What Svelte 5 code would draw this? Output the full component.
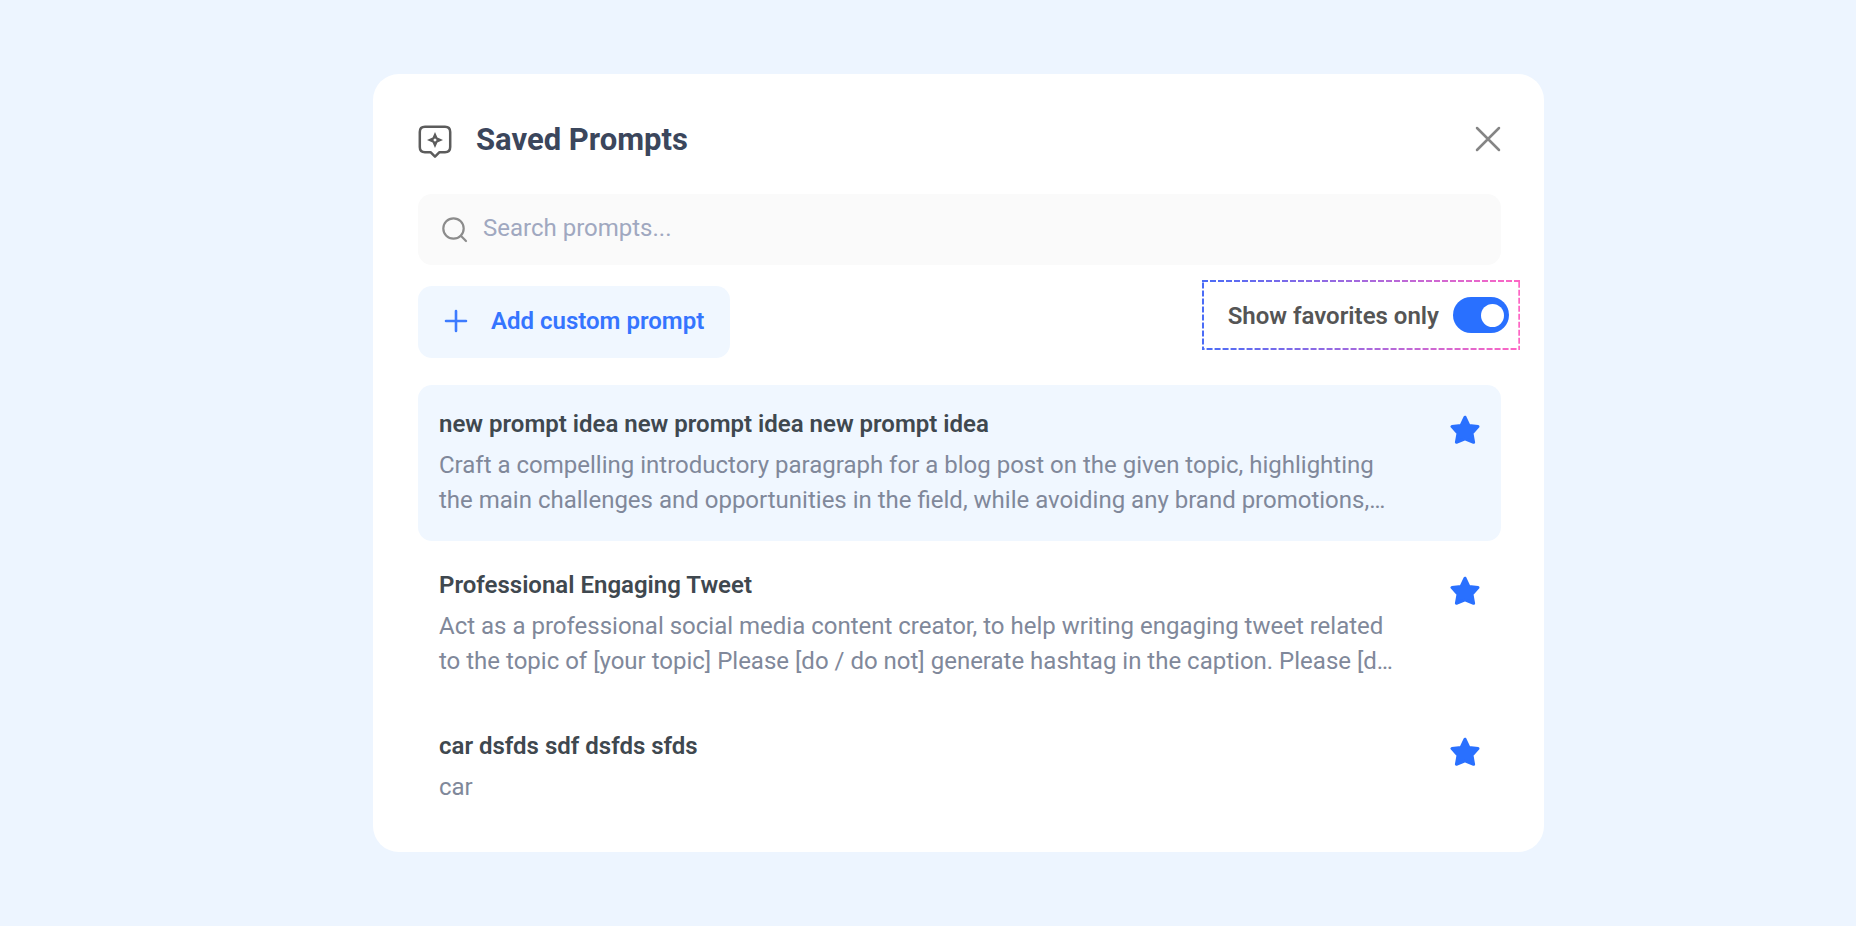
<script>
    // Search term and favorites filter
    let search = "";
    let favoritesOnly = true;

    // Saved prompts shown in the list
    let prompts = [
        {
            title: "new prompt idea new prompt idea new prompt idea",
            text: "Craft a compelling introductory paragraph for a blog post on the given topic, highlighting the main challenges and opportunities in the field, while avoiding any brand promotions,…",
            favorite: true
        },
        {
            title: "Professional Engaging Tweet",
            text: "Act as a professional social media content creator, to help writing engaging tweet related to the topic of [your topic] Please [do / do not] generate hashtag in the caption. Please [d…",
            favorite: true
        },
        {
            title: "car dsfds sdf dsfds sfds",
            text: "car",
            favorite: true
        }
    ];

    let selected = prompts[0].title;

    $: visible = prompts.filter((p) =>
        (!favoritesOnly || p.favorite) &&
        p.title.toLowerCase().includes(search.toLowerCase())
    );

    function toggleFavorite(prompt) {
        prompt.favorite = !prompt.favorite;
        prompts = prompts;
    }
</script>

<main>
    <section class="card">
        <header>
            <svg class="logo" viewBox="0 0 34 34" fill="none" stroke="#5c5c5c" stroke-width="2.5" stroke-linejoin="round">
                <path d="M7 1.8H27Q32.2 1.8 32.2 7V22Q32.2 27.2 27 27.2H21.5L17 31.7L12.5 27.2H7Q1.8 27.2 1.8 22V7Q1.8 1.8 7 1.8Z" />
                <path fill="#5c5c5c" fill-rule="evenodd" stroke="none" d="M17 7L19.4 12.6L25 15L19.4 17.4L17 23L14.6 17.4L9 15L14.6 12.6ZM17 13.2L15.2 15L17 16.8L18.8 15Z" />
            </svg>
            <h1>Saved Prompts</h1>
            <button class="close" aria-label="Close">
                <svg viewBox="0 0 26 26" stroke="#858585" stroke-width="2.5" stroke-linecap="round">
                    <path d="M2 2L24 24M24 2L2 24" />
                </svg>
            </button>
        </header>

        <label class="search">
            <svg viewBox="0 0 26 26" fill="none" stroke="#8c8c8c" stroke-width="2.2" stroke-linecap="round">
                <circle cx="11.5" cy="11.5" r="10.2" />
                <path d="M18.8 18.8L24 24" />
            </svg>
            <input type="text" placeholder="Search prompts..." aria-label="Search prompts" bind:value={search} />
        </label>

        <div class="toolbar">
            <button class="add">
                <svg viewBox="0 0 24 24" stroke="#3d7bff" stroke-width="2.6" stroke-linecap="round">
                    <path d="M12 2V22M2 12H22" />
                </svg>
                Add custom prompt
            </button>

            <label class="favorites">
                <!-- Dashed gradient outline -->
                <svg class="outline" aria-hidden="true">
                    <defs>
                        <linearGradient id="dash" gradientUnits="userSpaceOnUse" x1="0" y1="0" x2="100%" y2="0">
                            <stop offset="0" stop-color="#4a6cf7" />
                            <stop offset="1" stop-color="#ff66c4" />
                        </linearGradient>
                    </defs>
                    <rect width="100%" height="100%" fill="none" stroke="url(#dash)" stroke-width="4" stroke-dasharray="6 2" />
                </svg>
                <span>Show favorites only</span>
                <input type="checkbox" bind:checked={favoritesOnly} />
            </label>
        </div>

        <ul>
            {#each visible as prompt}
                <li class:selected={prompt.title === selected}>
                    <div class="body">
                        <h2>{prompt.title}</h2>
                        <p>{prompt.text}</p>
                    </div>
                    <button class="star" aria-label="Favorite" on:click={() => toggleFavorite(prompt)}>
                        <svg viewBox="0 0 30 30" fill={prompt.favorite ? "#2970ff" : "none"} stroke="#2970ff" stroke-width="3" stroke-linejoin="round">
                            <path d="M15 2.2L19 10.6L28 11.6L22 18.2L23.6 27.3L15 23.8L6.4 27.3L8 18.2L2 11.6L11 10.6Z" />
                        </svg>
                    </button>
                </li>
            {/each}
        </ul>
    </section>
</main>

<style>
    :global(body) {
        margin: 0;
        background: #edf5ff;
    }

    main {
        padding: 74px 312px 74px 373px;
        font-family: Roboto, "Open Sans", sans-serif;
        font-size: 24px;
        line-height: 35px;
    }

    .card {
        padding: 46px 43px 24px 45px;
        background: #fff;
        border-radius: 26px;
    }

    h1,
    h2,
    p,
    ul {
        margin: 0;
        padding: 0;
    }

    button {
        border: 0;
        padding: 0;
        background: none;
        font: inherit;
        cursor: pointer;
    }

    svg {
        display: block;
        flex: none;
    }

    header {
        display: flex;
        align-items: center;
        gap: 24px;
        height: 40px;
    }

    .logo {
        width: 34px;
        height: 34px;
        margin-top: 4px;
    }

    h1 {
        flex: 1;
        font-size: 31px;
        font-weight: 700;
        line-height: 40px;
        color: #3b465c;
    }

    .close svg {
        width: 26px;
        height: 26px;
        margin-bottom: 2px;
    }

    .search {
        display: flex;
        align-items: center;
        gap: 15px;
        height: 71px;
        margin-top: 34px;
        padding: 0 24px;
        background: #fafafa;
        border-radius: 14px;
    }

    .search svg {
        width: 26px;
        height: 26px;
    }

    .search input {
        flex: 1;
        padding: 0 0 2px;
        border: 0;
        outline: 0;
        background: none;
        font: inherit;
        color: #3b465c;
    }

    .search input::placeholder {
        color: #a0a8c0;
        opacity: 1;
    }

    .toolbar {
        display: flex;
        justify-content: space-between;
        align-items: flex-start;
        margin-top: 15px;
    }

    .add {
        display: flex;
        align-items: center;
        gap: 23px;
        box-sizing: border-box;
        height: 72px;
        margin-top: 6px;
        padding: 0 26px 2px;
        border-radius: 14px;
        background: #f0f7ff;
        color: #3575ff;
        font-weight: 600;
    }

    .add svg {
        width: 24px;
        height: 24px;
    }

    .favorites {
        position: relative;
        display: flex;
        align-items: center;
        gap: 14px;
        box-sizing: border-box;
        height: 70px;
        margin-right: -19px;
        padding: 0 11px 0 26px;
        font-weight: 600;
        color: #555;
    }

    .favorites span {
        padding-top: 2px;
    }

    .outline {
        position: absolute;
        inset: 0;
        width: 100%;
        height: 100%;
    }

    .favorites input {
        appearance: none;
        display: flex;
        align-items: center;
        box-sizing: border-box;
        width: 56px;
        height: 36px;
        margin: 0;
        padding: 0 5px;
        border-radius: 18px;
        background: #b8c0cc;
        cursor: pointer;
    }

    .favorites input::before {
        content: "";
        width: 23px;
        height: 23px;
        border-radius: 50%;
        background: #fff;
    }

    .favorites input:checked {
        justify-content: flex-end;
        background: #2970ff;
    }

    ul {
        display: flex;
        flex-direction: column;
        gap: 5px;
        margin-top: 27px;
        list-style: none;
    }

    li {
        display: flex;
        align-items: flex-start;
        gap: 50px;
        padding: 22px 21px 23px;
        border-radius: 14px;
    }

    .selected {
        background: #f0f7ff;
    }

    .body {
        flex: 1;
    }

    h2 {
        margin-bottom: 6px;
        font-size: 24px;
        font-weight: 600;
        line-height: 35px;
        color: #3f484f;
    }

    p {
        color: #80889a;
    }

    .star svg {
        width: 30px;
        height: 30px;
        margin-top: 8px;
    }
</style>
